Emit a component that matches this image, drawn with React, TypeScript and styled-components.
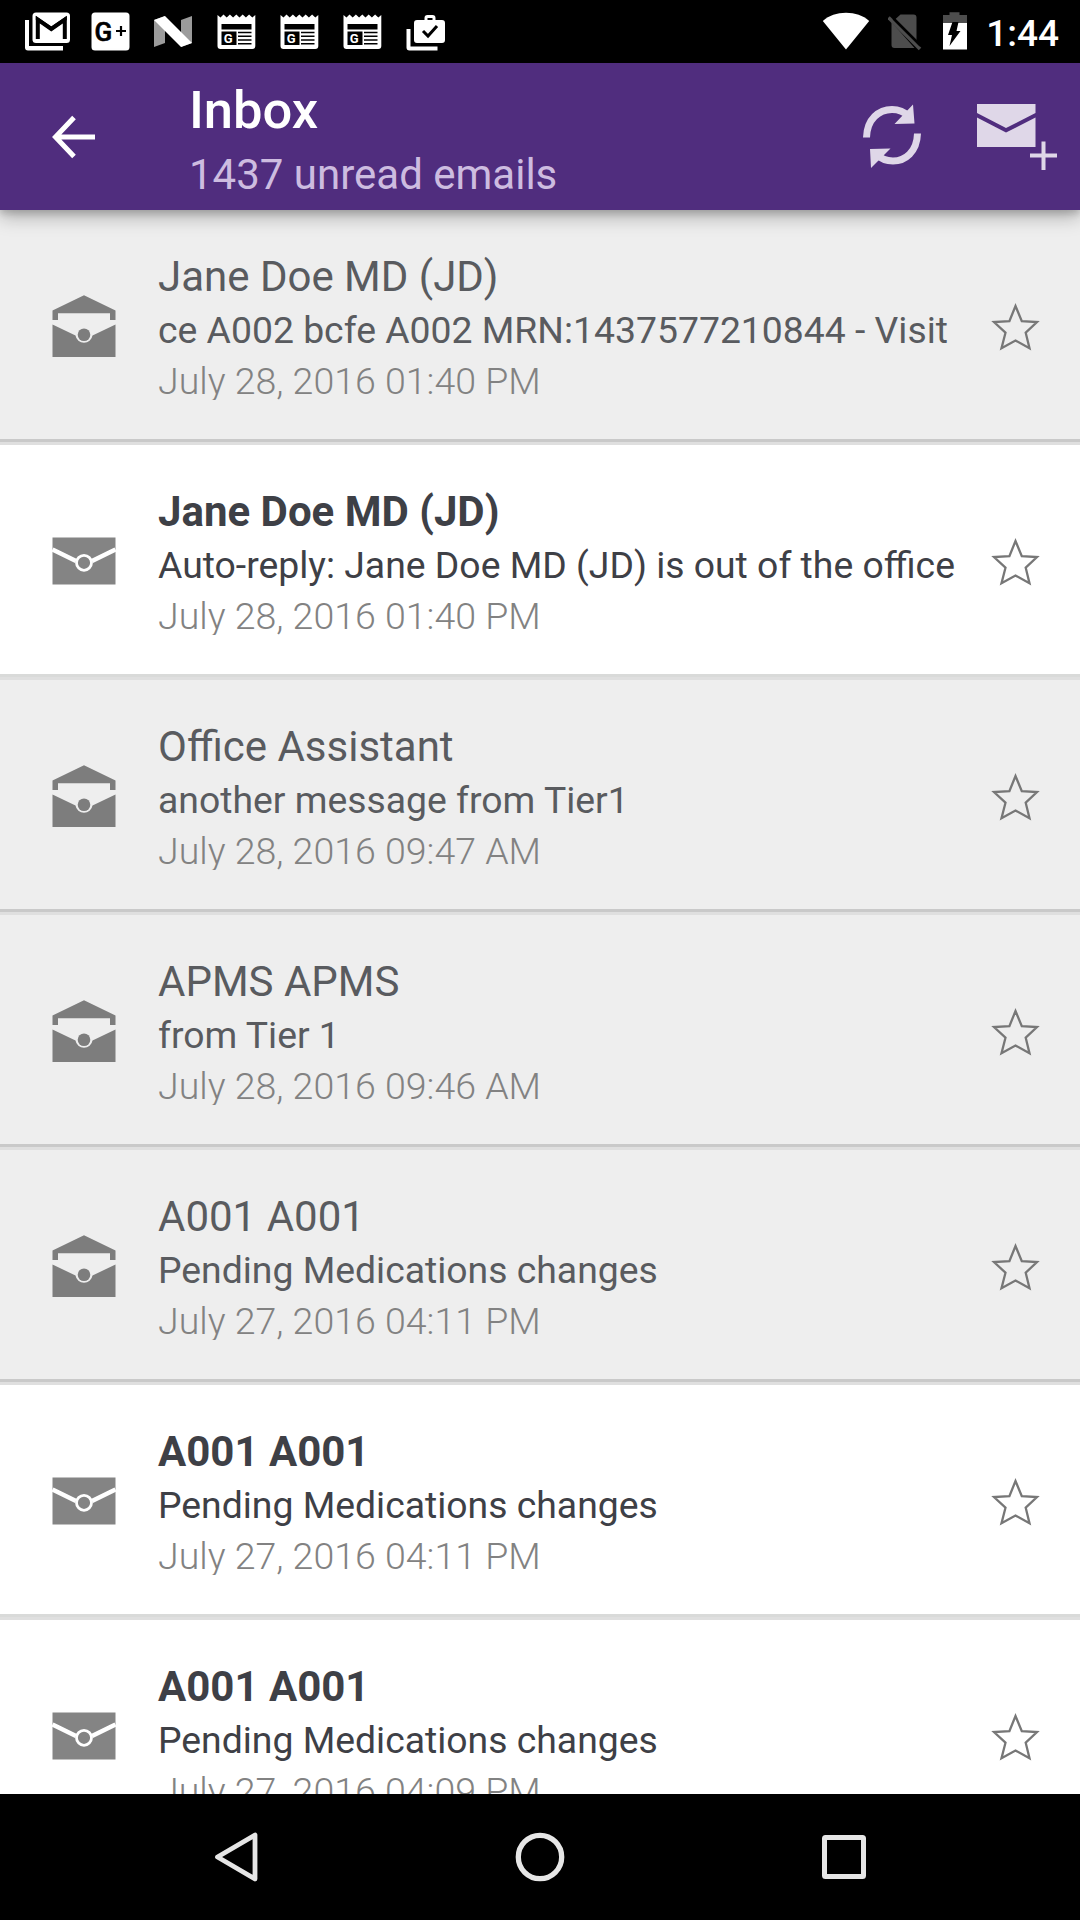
import React from "react";
import styled, { createGlobalStyle } from "styled-components";

const GlobalStyle = createGlobalStyle`
  * { box-sizing: border-box; }
  body { margin: 0; background: #000; }
  svg { display: block; flex: none; }
`;

const Screen = styled.div`
  width: 1080px;
  height: 1920px;
  display: flex;
  flex-direction: column;
  overflow: hidden;
  background: #fff;
  font-family: Roboto, "Noto Sans", sans-serif;
`;

const StatusBar = styled.div`
  height: 63px;
  flex: none;
  display: flex;
  justify-content: space-between;
  background: #000;
  padding: 0 21px 0 23px;
`;

const StatusGroup = styled.div<{ $gap: number }>`
  display: flex;
  gap: ${(p) => p.$gap}px;
`;

const Clock = styled.span`
  color: #fff;
  font-size: 37px;
  font-weight: 500;
  line-height: 67px;
`;

const AppBar = styled.header`
  height: 147px;
  flex: none;
  display: flex;
  align-items: center;
  background: #502d7e;
  padding: 0 22px 0 49px;
  position: relative;
  z-index: 1;
  box-shadow: 0 6px 18px rgba(0, 0, 0, 0.3), 0 4px 6px rgba(0, 0, 0, 0.12);
`;

const Titles = styled.div`
  flex: 1;
  margin-left: 88px;
  padding-top: 10px;
  display: flex;
  flex-direction: column;
  gap: 2px;
`;

const Title = styled.h1`
  margin: 0;
  color: #fff;
  font-size: 52.5px;
  font-weight: 500;
  line-height: 65px;
`;

const Subtitle = styled.div`
  color: #cdbce0;
  font-size: 42px;
  line-height: 60px;
`;

const Actions = styled.div`
  display: flex;
  gap: 52px;
  padding-bottom: 2px;
`;

const List = styled.main`
  flex: 1;
  min-height: 0;
  overflow: hidden;
`;

const Row = styled.article<{ $unread: boolean }>`
  height: 235px;
  display: flex;
  background: ${(p) => (p.$unread ? "#fff" : "#eeeeee")};
  border-bottom: 3px solid #dfdfdf;
  box-shadow: inset 0 -3px 0 ${(p) => (p.$unread ? "#d9dad9" : "#c9c9c9")};
  padding: 0 40px 0 52px;
`;

const IconSlot = styled.div`
  padding-top: 84px;
`;

const Details = styled.div`
  flex: 1;
  min-width: 0;
  padding-top: 39px;
  margin-left: 41px;
  white-space: nowrap;
`;

const Sender = styled.div<{ $unread: boolean }>`
  font-size: 42px;
  line-height: 56px;
  font-weight: ${(p) => (p.$unread ? 700 : 400)};
  color: ${(p) => (p.$unread ? "#3e4046" : "#595b5f")};
`;

const Subject = styled.div<{ $unread: boolean }>`
  font-size: 37.35px;
  line-height: 50px;
  color: ${(p) => (p.$unread ? "#3e4046" : "#595b5f")};
`;

const Stamp = styled.div`
  height: 45px;
  overflow: hidden;
  font-size: 37.5px;
  line-height: 52px;
  font-weight: 300;
  color: #828282;
`;

const StarSlot = styled.div`
  padding-top: 92px;
`;

const NavBar = styled.nav`
  height: 126px;
  flex: none;
  display: flex;
  align-items: center;
  justify-content: space-between;
  background: #000;
  padding: 0 210px;
`;

const GmailIcon = () => (
  <svg width="50" height="63" viewBox="0 0 50 63">
    <path d="M2 20h4v26h34v4.500H5a3 3 0 0 1-3-3z" fill="#fff" />
    <rect x="9.500" y="12.500" width="37.500" height="30.500" rx="3.500" fill="#fff" />
    <path d="M14.800 39V19.500L28.300 29 41.800 19.500V39" fill="none" stroke="#000" strokeWidth="4" />
    <path d="M12.800 20v-4l15.500 10.500L43.800 16v4L28.300 30.800z" fill="#000" />
  </svg>
);

const GooglePlusIcon = () => (
  <svg width="50" height="63" viewBox="0 0 50 63">
    <rect x="5.500" y="12.500" width="38" height="38" rx="3.500" fill="#fff" />
    <text x="8.500" y="40.500" fontFamily="Roboto, sans-serif" fontWeight="500" fontSize="26" stroke="#000" strokeWidth=".6" fill="#000">G</text>
    <path d="M30 31h10M35 26v10" stroke="#000" strokeWidth="2.200" />
  </svg>
);

const NougatIcon = () => (
  <svg width="50" height="63" viewBox="0 0 50 63">
    <path d="M5 20l11-4v27L5 47zM32 20l11-4v27l-11 4z" fill="#9b9b9b" />
    <path d="M5 20l11-4 27 27-11 4z" fill="#fff" />
  </svg>
);

const NewsIcon = () => (
  <svg width="50" height="63" viewBox="0 0 50 63">
    <path d="M5.500 15l3 2.500 3-3 3.200 3 3.200-3 3.200 3 3.200-3 3.200 3 3.200-3 3.200 3 3.200-3 3.200 3 3-2.500V46a3 3 0 0 1-3 3H8.500a3 3 0 0 1-3-3z" fill="#fff" />
    <path d="M9.500 24h30v5.500h-30zM9.500 31.500h15V45h-15z" fill="#000" />
    <path d="M26 32.500h13.500M26 36.200h13.500M26 40h13.500M26 43.800h13.500" stroke="#000" strokeWidth="1.600" />
    <text x="11.800" y="42.800" fontFamily="Roboto, sans-serif" fontWeight="700" fontSize="13" fill="#fff">G</text>
  </svg>
);

const WorkIcon = () => (
  <svg width="50" height="63" viewBox="0 0 50 63">
    <path d="M5.500 29h4v17.500h27V50.500h-28a3 3 0 0 1-3-3z" fill="#fff" />
    <path fillRule="evenodd" d="M16 20h7.500v-2a3 3 0 0 1 3-3h5a3 3 0 0 1 3 3v2H41a3 3 0 0 1 3 3v17a3 3 0 0 1-3 3H16a3 3 0 0 1-3-3V23a3 3 0 0 1 3-3zm10.500 0h5v-2h-5z" fill="#fff" />
    <path d="M22 31l5 5 9-10" fill="none" stroke="#000" strokeWidth="3" />
  </svg>
);

const WifiIcon = () => (
  <svg width="48" height="63" viewBox="0 0 48 63">
    <path d="M24 49.500L.800 21C7 15.500 15 12.800 24 12.800S41 15.500 47.200 21z" fill="#fff" />
  </svg>
);

const NoSimIcon = () => (
  <svg width="36" height="63" viewBox="2.500 0 36 63">
    <path d="M15 14.500h13a3 3 0 0 1 3 3V45L11 22l-1-3zM6 22l23 26H9a3 3 0 0 1-3-3z" fill="#4d4d4d" />
    <path d="M3 17.500L34.500 49" stroke="#4d4d4d" strokeWidth="3.600" />
    <path d="M8 18.500L35 45.500" stroke="#000" strokeWidth="2.500" />
  </svg>
);

const BatteryIcon = () => (
  <svg width="26" height="63" viewBox="0 0 26 63">
    <path d="M1 15h6.500v-2.700h10V15H25v8H1z" fill="#4d4d4d" />
    <path d="M1 23h24v26.500H1z" fill="#fff" />
    <path d="M10.500 22h6l-2 9h4l-11 15 2.500-11h-4z" fill="#000" />
  </svg>
);

const BackIcon = () => (
  <svg width="52" height="52" viewBox="0 0 52 52">
    <path d="M46 26H7M25 6.500L6.500 26 25 45.500" fill="none" stroke="#fff" strokeWidth="5" />
  </svg>
);

const RefreshIcon = () => (
  <svg width="62" height="70" viewBox="0 0 62 70">
    <g fill="none" stroke="#dfd7e8" strokeWidth="7">
      <path d="M4.500 36.500C5 18 17 8.500 30 8.500c7 0 13 3 17 7" />
      <path d="M55.500 32.500C55 51 43 60 31 60c-7 0-13-3-17-7" />
    </g>
    <path d="M51 3.500l1.500 19-20 .5zM9 67L8 48l20.500-.500z" fill="#dfd7e8" />
  </svg>
);

const ComposeIcon = () => (
  <svg width="82" height="70" viewBox="0 0 82 70">
    <path d="M1 3h58.500v9L30 27 1 12zM1 16.500L30 31.500 59.500 16.500V46H1z" fill="#dfd7e8" />
    <path d="M67.500 40.500V69M54 54.500h27" stroke="#dfd7e8" strokeWidth="4" />
  </svg>
);

const OpenEnvelope = () => (
  <svg width="65" height="65" viewBox="0 0 65 65">
    <path d="M.500 16.500L32 1.200 63.500 16.500V26H58v-6.700H6V26H.500z" fill="#7d7d7d" />
    <path d="M.500 30.500L23.500 41.500a8.600 8.600 0 0 0 17 0L63.500 30.500V63H.500z" fill="#7d7d7d" />
    <circle cx="32" cy="40.700" r="6.300" fill="#7d7d7d" />
  </svg>
);

const ClosedEnvelope = () => (
  <svg width="65" height="65" viewBox="0 0 65 65">
    <rect x=".5" y="8.500" width="63" height="47" fill="#848484" />
    <path d="M.500 20.500L24 32M63.500 20.500L40 32" stroke="#fff" strokeWidth="4.500" />
    <circle cx="32" cy="33.800" r="7.500" fill="#848484" stroke="#fff" strokeWidth="2.800" />
  </svg>
);

const StarIcon = () => (
  <svg width="50" height="50" viewBox="0 0 50 50">
    <path d="M25.500 4l6.300 15.200L47 20 35.700 30.700 39.500 46.200 25.500 38.500 11.500 46.200l4-15.500L4 20l15.400-.8z" fill="none" stroke="#777" strokeWidth="2.300" />
  </svg>
);

const NavBack = () => (
  <svg width="50" height="54" viewBox="0 0 50 54">
    <path d="M45 5v44L7.500 27z" fill="none" stroke="#e6e6e6" strokeWidth="4.800" strokeLinejoin="round" />
  </svg>
);

const NavHome = () => (
  <svg width="54" height="54" viewBox="0 0 54 54">
    <circle cx="27" cy="27" r="21.700" fill="none" stroke="#e6e6e6" strokeWidth="5.300" />
  </svg>
);

const NavRecent = () => (
  <svg width="50" height="54" viewBox="0 0 50 54">
    <rect x="4.500" y="7.500" width="39" height="39" rx="1" fill="none" stroke="#e6e6e6" strokeWidth="5" />
  </svg>
);

interface Message {
  sender: string;
  subject: string;
  date: string;
  unread: boolean;
}

const messages: Message[] = [
  { sender: "Jane Doe MD (JD)", subject: "ce A002 bcfe A002 MRN:1437577210844 - Visit", date: "July 28, 2016 01:40 PM", unread: false },
  { sender: "Jane Doe MD (JD)", subject: "Auto-reply: Jane Doe MD (JD) is out of the office", date: "July 28, 2016 01:40 PM", unread: true },
  { sender: "Office Assistant", subject: "another message from Tier1", date: "July 28, 2016 09:47 AM", unread: false },
  { sender: "APMS APMS", subject: "from Tier 1", date: "July 28, 2016 09:46 AM", unread: false },
  { sender: "A001 A001", subject: "Pending Medications changes", date: "July 27, 2016 04:11 PM", unread: false },
  { sender: "A001 A001", subject: "Pending Medications changes", date: "July 27, 2016 04:11 PM", unread: true },
  { sender: "A001 A001", subject: "Pending Medications changes", date: "July 27, 2016 04:09 PM", unread: true },
];

export default function App() {
  return (
    <Screen>
      <GlobalStyle />
      <StatusBar>
        <StatusGroup $gap={13}>
          <GmailIcon />
          <GooglePlusIcon />
          <NougatIcon />
          <NewsIcon />
          <NewsIcon />
          <NewsIcon />
          <WorkIcon />
        </StatusGroup>
        <StatusGroup $gap={18}>
          <WifiIcon />
          <NoSimIcon />
          <BatteryIcon />
          <Clock>1:44</Clock>
        </StatusGroup>
      </StatusBar>
      <AppBar>
        <BackIcon />
        <Titles>
          <Title>Inbox</Title>
          <Subtitle>1437 unread emails</Subtitle>
        </Titles>
        <Actions>
          <RefreshIcon />
          <ComposeIcon />
        </Actions>
      </AppBar>
      <List>
        {messages.map((m, i) => (
          <Row key={i} $unread={m.unread}>
            <IconSlot>{m.unread ? <ClosedEnvelope /> : <OpenEnvelope />}</IconSlot>
            <Details>
              <Sender $unread={m.unread}>{m.sender}</Sender>
              <Subject $unread={m.unread}>{m.subject}</Subject>
              <Stamp>{m.date}</Stamp>
            </Details>
            <StarSlot>
              <StarIcon />
            </StarSlot>
          </Row>
        ))}
      </List>
      <NavBar>
        <NavBack />
        <NavHome />
        <NavRecent />
      </NavBar>
    </Screen>
  );
}
